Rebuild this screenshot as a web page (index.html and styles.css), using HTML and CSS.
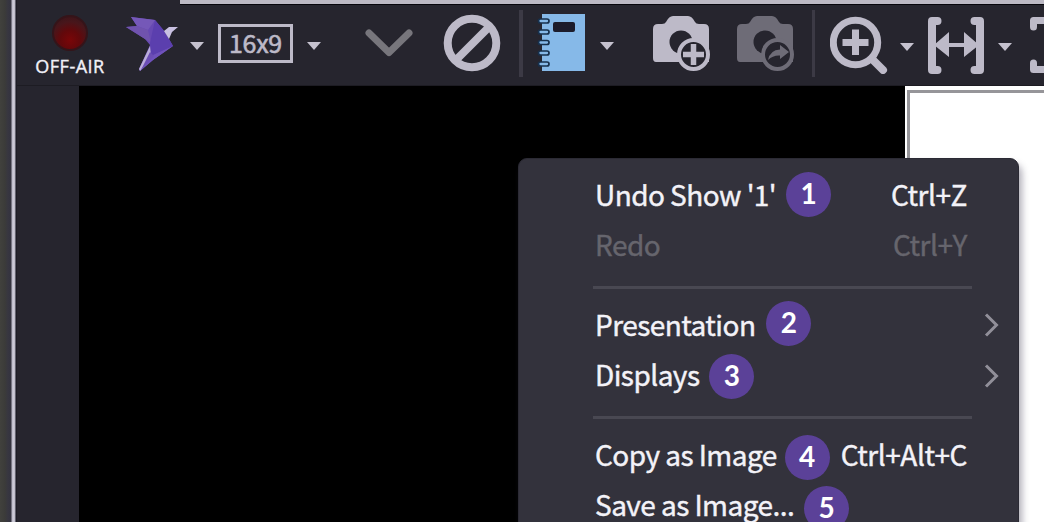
FILE: index.html
```html
<!DOCTYPE html>
<html lang="en">
<head>
<meta charset="utf-8">
<title>Presentation</title>
<link rel="stylesheet" href="styles.css">
</head>
<body>
<div class="app">
  <div class="edge"></div>
  <main class="main">
    <div class="strip"></div>
    <header class="toolbar">
      <div class="status">
        <span class="lamp"></span>
        <span class="status-label">OFF-AIR</span>
      </div>
      <svg class="bird" width="54" height="64" viewBox="0 0 54 64">
        <path fill="#6749b3" d="M5 1 29 4 39 16 47 30 27 44 14 55 13 53 24 29 19 23 0 11 11 10z"/>
        <path fill="#7558b8" d="M5 1 29 4 22 14 11 10z"/>
        <path fill="#7053ae" d="M0 11 11 10 22 14 25 27 19 23z"/>
        <path fill="#5b3fae" d="M29 4 39 16 47 30 25 40 24 27z"/>
        <path fill="#6f52bb" d="M25 40 47 30 27 44 14 55z"/>
        <path fill="#c9c1e2" d="M38 15 43 11 52 11 46 16 43 23z"/>
        <path fill="#b9add9" d="M24 30 25 40 14 55 13 53z"/>
        <path fill="#6b4db5" d="M24 36 28 40 15 54z"/>
      </svg>
      <svg class="caret caret-bird" width="14" height="8" viewBox="0 0 14 8"><path d="M0 0H14L7 8z"/></svg>
      <div class="ratio">16x9</div>
      <svg class="caret caret-ratio" width="14" height="8" viewBox="0 0 14 8"><path d="M0 0H14L7 8z"/></svg>
      <svg class="down" width="48" height="34" viewBox="0 0 48 34"><path d="M4 8 24 27.500 44 8"/></svg>
      <svg class="ban" width="58" height="58" viewBox="0 0 58 58"><circle cx="29" cy="29" r="24.3"/><path d="M13 46 46 13"/></svg>
      <span class="sep sep-wide"></span>
      <svg class="book" width="46" height="58" viewBox="0 0 46 58">
        <path fill="#86b9e8" d="M3 0H46V57H3z"/>
        <rect x="14" y="8" width="22" height="10" rx="2" fill="#1c1c2b"/>
        <g fill="#86b9e8" stroke="#17304c" stroke-width="1.700"><rect x="-.5" y="5" width="10.500" height="4" rx="2"/><rect x="-.5" y="16" width="10.500" height="4" rx="2"/><rect x="-.5" y="26.500" width="10.500" height="4" rx="2"/><rect x="-.5" y="37" width="10.500" height="4" rx="2"/><rect x="-.5" y="48" width="10.500" height="4" rx="2"/></g>
      </svg>
      <svg class="caret caret-book" width="14" height="8" viewBox="0 0 14 8"><path d="M0 0H14L7 8z"/></svg>
      <svg class="camera" width="58" height="56" viewBox="0 0 58 56">
        <path fill="currentColor" d="M13 6Q16 0 20 0H35Q39 0 42 6Q43 8 46 8H51Q56 8 56 13V46H3Q0 46 0 42V13Q0 8 5 8H9Q12 8 13 6z"/>
        <circle class="hole" cx="28" cy="26" r="11.5"/>
        <circle class="hole ring" cx="40.500" cy="38.5" r="14.5"/>
        <path class="plus" d="M40.500 28V49M30 38.5H51"/>
      </svg>
      <svg class="camera camera-off" width="58" height="56" viewBox="0 0 58 56">
        <path fill="currentColor" d="M13 6Q16 0 20 0H35Q39 0 42 6Q43 8 46 8H51Q56 8 56 13V46H3Q0 46 0 42V13Q0 8 5 8H9Q12 8 13 6z"/>
        <circle class="hole" cx="28" cy="26" r="11.5"/>
        <circle class="hole ring" cx="40.500" cy="38.5" r="14.5"/>
        <path fill="currentColor" d="M31 44Q33 34 43 33.500V29L52 36 43 43V39.500Q36 39 31 44z"/>
      </svg>
      <span class="sep"></span>
      <svg class="lens" width="58" height="58" viewBox="0 0 58 58">
        <circle cx="25.5" cy="26.5" r="22.2"/>
        <path d="M25.500 13.500V39M12.500 26.500H38.500"/>
        <path class="handle" d="M42 43 53 54"/>
      </svg>
      <svg class="caret caret-lens" width="14" height="8" viewBox="0 0 14 8"><path d="M0 0H14L7 8z"/></svg>
      <svg class="fit" width="58" height="57" viewBox="0 0 58 57">
        <path class="line" d="M9.500 4H4V53H9.500M46.500 4H52V53H46.500"/>
        <path class="fill" d="M6 28 21 15V26H36V15L51 28 36 40V30H21V40z"/>
      </svg>
      <svg class="caret caret-fit" width="14" height="8" viewBox="0 0 14 8"><path d="M0 0H14L7 8z"/></svg>
      <svg class="frame" width="14" height="57" viewBox="0 0 14 57"><path d="M14 3.500H3.500V10M14 52.500H3.500V46"/></svg>
    </header>
    <section class="stage">
      <div class="gutter"></div>
      <div class="canvas"></div>
      <div class="panel"><div class="page"></div></div>
    </section>
  </main>

  <nav class="menu">
    <div class="item"><span class="label">Undo Show '1'</span><span class="badge b1">1</span><span class="key">Ctrl+Z</span></div>
    <div class="item disabled"><span class="label">Redo</span><span class="key">Ctrl+Y</span></div>
    <hr class="rule">
    <div class="item"><span class="label">Presentation</span><span class="badge b2">2</span><svg class="more" width="16" height="24" viewBox="0 0 16 24"><path d="M2 1.500 12.500 12 2 22.500"/></svg></div>
    <div class="item"><span class="label">Displays</span><span class="badge b3">3</span><svg class="more" width="16" height="24" viewBox="0 0 16 24"><path d="M2 1.500 12.500 12 2 22.500"/></svg></div>
    <hr class="rule">
    <div class="item"><span class="label">Copy as Image</span><span class="badge b4">4</span><span class="key">Ctrl+Alt+C</span></div>
    <div class="item"><span class="label">Save as Image...</span><span class="badge b5">5</span></div>
  </nav>
</div>
</body>
</html>
```
FILE: styles.css
```css
* { box-sizing: border-box; }
body { margin: 0; background: #000; font-family: "Noto Sans CJK SC", "Noto Sans", sans-serif; }
svg { display: block; flex: none; }
.app { position: relative; display: flex; width: 1044px; height: 522px; overflow: hidden; }
.edge {
  flex: none; width: 17px;
  background: linear-gradient(90deg, #41413d 0, #3b3b39 5px, #373640 8px, #34333f 11px, #bbb9c7 12px, #d2d0dc 14px, #b0aebc 15px, #171720 16px, #23222c 17px);
}
.main { flex: 1; min-width: 0; display: flex; flex-direction: column; background: #26252e; }
.strip { height: 5px; margin-left: 163px; background: #bcb9c4; border-bottom: 1px solid #07060c; flex: none; }
.toolbar { display: flex; align-items: flex-start; height: 81px; flex: none; overflow: hidden; color: #bdbac8; border-bottom: 1px solid #1d1c23; }
.status { width: 72px; margin-left: 17px; padding-top: 10px; display: flex; flex-direction: column; align-items: center; flex: none; }
.lamp { width: 36px; height: 36px; border-radius: 50%; background: radial-gradient(circle at 50% 72%, #7a0608 0, #62080b 35%, #48161b 65%, #341419 100%); border: 2px solid #351419; }
.status-label { margin-top: 5px; font: 18px/20px "Open Sans", sans-serif; letter-spacing: .5px; color: #f1f0f7; white-space: nowrap; -webkit-text-stroke: .4px; }
.bird { margin: 11px 0 0 20px; }
.caret { fill: #c5c2cf; margin-top: 37px; }
.caret-bird { margin-left: 10px; }
.ratio { flex: none; margin: 19px 0 0 14px; width: 75px; height: 39px; border: 3px solid #bdbac8; font-size: 25px; line-height: 31px; text-align: center; letter-spacing: -.3px; -webkit-text-stroke: .6px; }
.caret-ratio { margin-left: 14px; }
.down { margin: 20px 0 0 44px; }
.down path { fill: none; stroke: #77767c; stroke-width: 7; stroke-linecap: round; stroke-linejoin: round; }
.ban { margin: 9px 0 0 30px; fill: none; stroke: currentColor; stroke-width: 8; }
.sep { flex: none; width: 3px; height: 67px; margin: 5px 0 0 17px; background: #3c3a45; }
.sep-wide { width: 4px; margin-left: 18px; }
.book { margin: 9px 0 0 16px; overflow: visible; }
.caret-book { margin-left: 15px; }
.camera { margin: 11px 0 0 39px; }
.camera-off { margin-left: 26px; color: #6e6c77; }
.hole { fill: #26252e; }
.ring { stroke: currentColor; stroke-width: 4; }
.plus { stroke: currentColor; stroke-width: 5.5; }
.lens { margin: 11px 0 0 15px; fill: none; stroke: currentColor; stroke-width: 7; }
.lens .handle { stroke-width: 8; stroke-linecap: round; }
.caret-lens { margin: 38px 0 0 12px; }
.fit { margin: 12px 0 0 14px; }
.line { stroke-width: 8; }
.frame path { stroke-width: 7; }
.line, .frame path { fill: none; stroke: currentColor; stroke-linecap: round; stroke-linejoin: round; }
.fill { fill: currentColor; }
.caret-fit { margin: 38px 0 0 12px; }
.frame { margin: 12px 0 0 18px; }
.stage { flex: 1; display: flex; min-height: 0; }
.gutter { width: 62px; flex: none; }
.canvas { width: 826px; flex: none; background: #000; }
.panel { flex: 1; background: #fff; padding: 4px 0 0 2px; }
.page { height: 100%; border-top: 3px solid #969599; border-left: 3px solid #969599; }
.menu {
  position: absolute; left: 518px; top: 158px; width: 501px; height: 400px;
  padding: 12px 51px 0 76px; border: 1px solid #2b2a34; border-radius: 9px; background: #33323c;
  box-shadow: 3px 6px 7px rgba(55, 50, 75, .4);
  color: #f3f2f8; font-size: 28px; line-height: 46px;
}
.item { display: flex; align-items: center; height: 50.5px; white-space: nowrap; }
.label, .key { letter-spacing: -.55px; padding-bottom: 5px; -webkit-text-stroke: .4px; }
.key { margin-left: auto; letter-spacing: -.45px; }
.disabled { color: #66656d; }
.badge { flex: none; width: 45px; height: 45px; margin-left: 10px; border-radius: 50%; background: #5b4198; color: #fff; font: bold 28px/43px Lato, sans-serif; text-align: center; }
.b1 { margin-top: -4px; }
.b2 { margin-top: -6px; margin-left: 11px; }
.b3 { margin-top: -1px; margin-left: 10px; }
.b4 { margin-top: 3px; margin-left: 8px; }
.b5 { margin-top: 3px; margin-left: 10px; }
.more { margin: -2px -33px 0 auto; fill: none; stroke: #918f99; stroke-width: 3; }
.rule { height: 3px; margin: 14px -5px 12px -2px; border: 0; background: #494852; }
```
